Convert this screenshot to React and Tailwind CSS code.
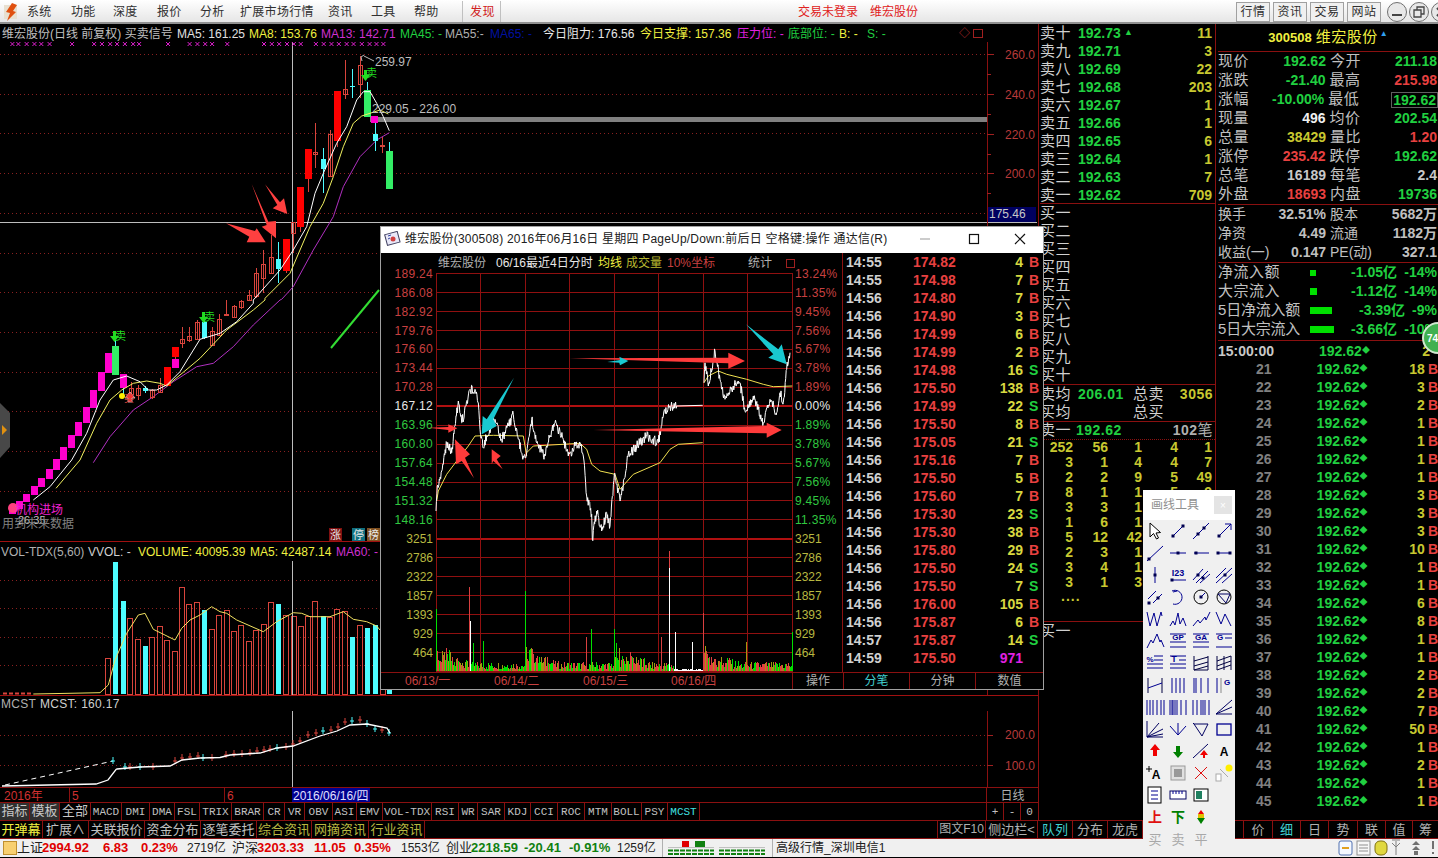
const rnd = (i) => {
  const s = Math.sin(i * 12.9898) * 43758.5453;
  return s - Math.floor(s);
};
const pts = (list) => list.map(([x, y]) => `${x.toFixed(1)},${y.toFixed(1)}`).join(" ");
// zoom crop coords -> page coords
const z9 = (list) => list.map(([x, y]) => [x / 3, 300 + y / 3]);
const z10 = (list) => list.map(([x, y]) => [x / 3, 540 + y / 3]);
const z11 = (list) => list.map(([x, y]) => [200 + x / 3, 40 + y / 3]);
const d4 = (list) => list.map(([x, y]) => [380 + x / 3, 225 + y / 3]);

function jitter(list, amp, seed) {
  const out = [];
  list.forEach((p, i) => {
    out.push(p);
    const n = list[i + 1];
    if (!n) return;
    const steps = Math.max(1, Math.round(Math.abs(n[0] - p[0]) / 1.5));
    for (let k = 1; k < steps; k++) {
      const t = k / steps;
      out.push([p[0] + (n[0] - p[0]) * t, p[1] + (n[1] - p[1]) * t + (rnd(seed + i * 31 + k) - 0.5) * amp]);
    }
  });
  return out;
}

const candleFill = { h: "none", r: "#ff0000", c: "#4dfcff", g: "#33ee66", m: "#ff00cc" };
const candleStroke = { h: "#d8443c", r: "#d8443c", c: "#4dfcff", g: "#4dfcff", m: "#4dfcff" };

const stairs = [
  [325, 158, 220], [303, 216, 272], [281, 270, 323], [259, 321, 369], [235, 367, 407], [214, 405, 444], [191, 442, 480],
  [169, 478, 511], [148, 508, 537], [124, 534, 561], [103, 558, 585], [79, 582, 606], [58, 604, 628], [38, 620, 642],
].map(([x, t, b]) => [x / 3, 300 + t / 3, 300 + b / 3, null, null, "m"]);

const c9 = (x, t, b, wt, wb, k) => [x / 3, 300 + t / 3, 300 + b / 3, wt == null ? null : 300 + wt / 3, wb == null ? null : 300 + wb / 3, k];
const c11 = (x, t, b, wt, wb, k) => [200 + x / 3, 40 + t / 3, 40 + b / 3, wt == null ? null : 40 + wt / 3, wb == null ? null : 40 + wb / 3, k];

const candles = [
  ...stairs,
  c9(347, 137, 225, 120, 137, "g"), c9(371, 222, 264, 222, 285, "m"), c9(394, 265, 282, 245, 300, "h"), c9(415, 265, 285, 255, 300, "h"),
  c9(436, 264, 272, 258, 280, "c"), c9(458, 272, 292, 268, 298, "h"), c9(480, 257, 278, 235, 280, "h"), c9(502, 202, 258, 202, 258, "r"),
  c9(526, 178, 204, 171, 204, "m"), c9(526, 141, 171, 141, 178, "r"), c9(547, 118, 130, 80, 145, "h"), c9(568, 108, 122, 80, 125, "h"),
  c9(592, 66, 118, 60, 120, "h"), c9(613, 65, 113, 45, 118, "c"), c9(637, 95, 135, 80, 138, "h"), c9(658, 58, 105, 42, 108, "h"),
  c9(680, 43, 46, 0, 46, "h"), c9(703, 20, 52, 15, 55, "h"), c9(724, 5, 22, 0, 28, "h"),
  c11(148, 765, 780, 750, 780, "h"), c11(169, 700, 770, 685, 775, "h"), c11(190, 672, 715, 630, 760, "h"), c11(213, 652, 700, 585, 702, "h"),
  c11(235, 657, 687, 605, 730, "c"), c11(259, 598, 692, 598, 700, "r"), c11(280, 547, 580, 547, 640, "h"), c11(302, 442, 560, 442, 575, "r"),
  c11(325, 328, 416, 328, 455, "r"), c11(346, 337, 343, 248, 383, "h"), c11(370, 358, 386, 325, 458, "c"), c11(391, 282, 410, 270, 412, "h"),
  c11(412, 153, 303, 153, 320, "r"), c11(436, 148, 163, 60, 178, "h"), c11(458, 138, 142, 88, 175, "c"), c11(481, 75, 133, 47, 175, "h"),
  c11(502, 150, 230, 125, 150, "g"), c11(526, 283, 304, 248, 332, "c"), c11(548, 316, 320, 292, 338, "h"), c11(568, 333, 446, 306, 333, "g"),
];

const ma5 = [
  ...z9([[100, 600], [150, 560], [215, 480], [260, 400], [300, 300], [340, 240], [380, 228], [420, 245], [445, 270], [470, 270], [500, 255], [540, 215], [600, 118], [660, 100], [710, 65], [760, 10]]),
  ...z11([[160, 780], [240, 690], [280, 630], [320, 560], [345, 460], [370, 400], [410, 310], [440, 260], [470, 180], [490, 155], [510, 155], [530, 190], [550, 230], [568, 272]]),
];
const ma8 = [
  ...z9([[168, 565], [240, 480], [290, 370], [330, 300], [365, 270], [400, 250], [440, 243], [480, 250], [500, 258], [540, 225], [600, 175], [680, 90], [760, 30], [795, 0]]),
  ...z11([[195, 775], [270, 700], [330, 560], [370, 490], [400, 410], [430, 320], [460, 250], [485, 228], [540, 210], [565, 222]]),
];
const ma13 = [
  ...z9([[280, 488], [330, 410], [400, 330], [460, 290], [520, 245], [590, 200], [640, 190], [700, 140], [760, 75], [840, 0]]),
  ...z11([[245, 778], [280, 740], [340, 630], [400, 530], [430, 440], [480, 350], [530, 300], [568, 278]]),
];

const crossX = [
  27, 40, 58, 75, 90, 108, 157, 205, 222, 240, 255, 272, 290, 303, 366, 413, 430, 447, 462, 495, 575, 592, 608, 625, 640, 655, 688, 705, 722, 738, 755, 770, 788, 805, 820, 835,
].map((x) => x / 2.178);

function MainChart() {
  const grid = Array.from({ length: 12 }, (_, i) => Math.round(54 + i * 39.7) + 0.5);
  return (
    <svg width="1038" height="499" viewBox="0 42 1038 499" className="block">
      {grid.map((y) => (
        <line key={y} x1="0" x2="987" y1={y} y2={y} stroke="#8a2020" strokeDasharray="1 3" />
      ))}
      <line x1="292.5" x2="292.5" y1="42" y2="541" stroke="#bdbdbd" />
      <line x1="0" x2="1037" y1="222.5" y2="222.5" stroke="#bdbdbd" />
      {crossX.map((x) => (
        <path key={x} d={`M${x - 2} 42l4 4m0 -4l-4 4`} stroke="#e020d0" />
      ))}
      <rect x="370" y="117" width="617" height="5" fill="#808080" />
      <polyline points={pts(ma13)} fill="none" stroke="#b030c0" />
      {candles.map(([x, t, b, wt, wb, k], i) => {
        const w = k === "h" ? 4 : k === "c" ? 5 : 7;
        return (
          <g key={i} shapeRendering="crispEdges">
            {wt != null && <line x1={x} x2={x} y1={wt} y2={wb} stroke={candleStroke[k]} />}
            <rect x={x - w / 2} y={t} width={w} height={b - t} fill={candleFill[k]} stroke={k === "h" ? candleStroke.h : "none"} />
          </g>
        );
      })}
      <rect x="371" y="116" width="7" height="7" fill="#ff00cc" />
      <polyline points={pts(ma8)} fill="none" stroke="#f0f060" />
      <polyline points={pts(ma5)} fill="none" stroke="#ffffff" />
      {/* 红色标注箭头 */}
      <polygon points={pts(z11([[78, 550], [165, 573], [170, 565], [197, 607], [140, 607], [148, 590]]))} fill="#ff4040" />
      <polygon points={pts(z11([[155, 432], [205, 545], [228, 543], [228, 595], [185, 560], [200, 555]]))} fill="#ff4040" />
      <polygon points={pts(z11([[195, 433], [240, 487], [252, 475], [262, 522], [218, 505], [232, 495]]))} fill="#ff4040" />
      <line x1="331" y1="348" x2="379" y2="290" stroke="#33dd33" strokeWidth="2" />
      {/* 信号 */}
      <path d="M361 57l3 -2 m-3 2l1 4m2 -5l10 5" stroke="#bbb" fill="none" />
      <text x="375" y="66" fontSize="12" fill="#bdbdbd">259.97</text>
      <text x="372" y="113" fontSize="12" fill="#bdbdbd">229.05 - 226.00</text>
      <path d="M364 70h3v5h3l-4.5 6l-4.5 -6h3z" fill="#22dd22" />
      <text x="366" y="77" fontSize="11" fill="#22dd22">卖</text>
      <path d="M113 331h3v5h3l-4.5 6l-4.5 -6h3z" fill="#22dd22" />
      <text x="115" y="340" fontSize="11" fill="#22dd22">卖</text>
      <path d="M202 312h3v5h3l-4.5 6l-4.5 -6h3z" fill="#22dd22" />
      <text x="204" y="321" fontSize="11" fill="#22dd22">卖</text>
      <circle cx="122" cy="396" r="3" fill="#ffee00" />
      <path d="M130 392l5 6h-3v4h-4v-4h-3z" fill="#ff3030" stroke="#d8a0a0" />
      <text x="124" y="402" fontSize="10" fill="#d8443c">买</text>
      <circle cx="13" cy="508" r="5" fill="#ff4080" />
      <text x="15" y="514" fontSize="12" fill="#f020d0">机构进场</text>
      <text x="18" y="524" fontSize="11" fill="#c0c0c0">26.35</text>
      <text x="2" y="528" fontSize="12" fill="#808080">用到未来数据</text>
      <rect x="329" y="528" width="13" height="13" fill="#801010" />
      <text x="330" y="539" fontSize="11" fill="#e8e8e8">涨</text>
      <rect x="352" y="528" width="13" height="13" fill="#107080" />
      <text x="353" y="539" fontSize="11" fill="#e8e8e8">停</text>
      <rect x="367" y="528" width="13" height="13" fill="#805020" />
      <text x="368" y="539" fontSize="11" fill="#e8e8e8">榜</text>
      {/* 坐标 */}
      <line x1="987.5" x2="987.5" y1="42" y2="541" stroke="#8a1010" />
      {[54, 94, 134, 173].map((y, i) => (
        <g key={y}>
          <line x1="987" x2="994" y1={y + 0.5} y2={y + 0.5} stroke="#a02020" />
          <line x1="987" x2="991" y1={y + 20.5} y2={y + 20.5} stroke="#a02020" />
          <text x="1005" y={y + 5} fontSize="12" fill="#b83a3a">{["260.0", "240.0", "220.0", "200.0"][i]}</text>
        </g>
      ))}
      <rect x="988" y="207" width="48" height="15" fill="#000060" />
      <text x="989" y="218" fontSize="12" fill="#c8c8c8">175.46</text>
      {/* 左侧把手 */}
      <polygon points="0,403 10,413 10,447 0,458" fill="#484848" />
      <polygon points="2,425 7,430 2,435" fill="#e09010" />
    </svg>
  );
}

const volBars = [
  [324, 355, "h"], [346, 66, "c"], [370, 183, "c"], [391, 235, "h"], [415, 297, "h"], [436, 318, "c"], [457, 291, "h"], [481, 258, "h"], [502, 300, "h"], [525, 333, "h"],
  [547, 141, "h"], [568, 192, "h"], [591, 188, "h"], [613, 210, "c"], [636, 267, "h"], [658, 225, "h"], [680, 210, "h"], [703, 273, "h"], [724, 255, "h"], [748, 303, "h"],
  [769, 272, "h"], [791, 252, "h"], [813, 188, "h"], [835, 192, "c"], [857, 225, "h"], [881, 230, "h"], [902, 258, "h"], [925, 230, "h"], [946, 183, "h"], [970, 228, "c"],
  [991, 232, "h"], [1012, 207, "h"], [1035, 213, "h"], [1057, 290, "c"], [1081, 255, "h"], [1102, 263, "c"], [1126, 255, "c"], [1148, 400, "h"], [1168, 448, "c"],
];
const volMa = [[100, 462], [300, 458], [325, 435], [345, 360], [380, 280], [415, 225], [435, 220], [460, 268], [525, 300], [545, 265], [570, 240], [600, 225], [635, 200], [660, 215], [680, 220], [710, 240], [790, 275], [830, 245], [880, 218], [905, 220], [930, 230], [990, 230], [1030, 215], [1060, 238], [1100, 245], [1130, 258], [1140, 270]];

function VolChart() {
  return (
    <svg width="1038" height="135" viewBox="0 561 1038 135" className="block">
      {[580, 608, 637, 665].map((y) => (
        <line key={y} x1="0" x2="987" y1={y + 0.5} y2={y + 0.5} stroke="#8a2020" strokeDasharray="1 3" />
      ))}
      <line x1="3" x2="33" y1="693.5" y2="693.5" stroke="#d8443c" strokeWidth="2" strokeDasharray="4 2" />
      {volBars.map(([x, t, k]) => (
        <rect key={x} shapeRendering="crispEdges" x={x / 3 - 2.5} y={540 + t / 3} width="5" height={694 - (540 + t / 3)} fill={k === "c" ? "#4dfcff" : "none"} stroke={k === "c" ? "none" : "#d8443c"} />
      ))}
      <line x1="292.5" x2="292.5" y1="561" y2="695" stroke="#bdbdbd" />
      <polyline points={pts(z10(volMa))} fill="none" stroke="#f0e060" />
      <line x1="987.5" x2="987.5" y1="561" y2="696" stroke="#8a1010" />
      <line x1="0" x2="1038" y1="695.5" y2="695.5" stroke="#a01010" />
    </svg>
  );
}

const mcstLine = [[2, 786], [96, 784], [108, 780], [116, 769.5], [117, 769], [140, 767], [170, 766], [182, 760], [200, 758], [220, 757.5], [230, 755], [260, 753], [277, 748], [293, 746], [320, 736], [337, 731], [350, 725], [367, 724], [387, 728], [390, 733]];
const mcstMarks = [[113, 761, "c"], [125, 767, "c"], [130, 767, "h"], [140, 767, "c"], [153, 767, "h"], [175, 761, "h"], [182, 758, "h"], [190, 757, "h"], [198, 756, "h"], [203, 758, "c"], [212, 758, "h"], [226, 755, "h"], [234, 754, "h"], [242, 754, "h"], [250, 753, "h"], [257, 751, "h"], [264, 750, "h"], [270, 749, "h"], [277, 748, "c"], [286, 747, "h"], [293, 744, "h"], [300, 741, "h"], [308, 735, "h"], [316, 733, "h"], [323, 731, "c"], [331, 730, "h"], [338, 727, "h"], [345, 722, "h"], [352, 721, "c"], [360, 720, "h"], [367, 724, "c"], [375, 729, "c"], [382, 730, "h"], [389, 733, "c"]];

function McstChart() {
  return (
    <svg width="1038" height="76" viewBox="0 711 1038 76" className="block">
      {[735, 765].map((y) => (
        <line key={y} x1="0" x2="987" y1={y + 0.5} y2={y + 0.5} stroke="#8a2020" strokeDasharray="1 3" />
      ))}
      <line x1="292.5" x2="292.5" y1="711" y2="787" stroke="#bdbdbd" />
      <line x1="5" y1="785" x2="113" y2="761" stroke="#ffffff" strokeDasharray="5 4" />
      {mcstMarks.map(([x, y, k]) => (
        <path key={x} d={`M${x} ${y - 4}v7M${x - 2} ${y}h4`} stroke={k === "c" ? "#4dfcff" : "#d8443c"} />
      ))}
      <polyline points={pts(mcstLine)} fill="none" stroke="#ffffff" strokeWidth="1.3" />
      <line x1="987.5" x2="987.5" y1="711" y2="787" stroke="#8a1010" />
      <line x1="987" x2="993" y1="735.5" y2="735.5" stroke="#a02020" />
      <line x1="987" x2="993" y1="765.5" y2="765.5" stroke="#a02020" />
      <text x="1005" y="739" fontSize="12" fill="#b83a3a">200.0</text>
      <text x="1005" y="770" fontSize="12" fill="#b83a3a">100.0</text>
    </svg>
  );
}

const priceLabels = ["189.24", "186.08", "182.92", "179.76", "176.60", "173.44", "170.28", "167.12", "163.96", "160.80", "157.64", "154.48", "151.32", "148.16"];
const pctLabels = ["13.24%", "11.35%", "9.45%", "7.56%", "5.67%", "3.78%", "1.89%", "0.00%", "1.89%", "3.78%", "5.67%", "7.56%", "9.45%", "11.35%"];
const volLabels = ["3251", "2786", "2322", "1857", "1393", "929", "464"];
const rowY = (k) => 272.7 + k * 18.94;
const colX = [168, 301, 435, 568, 703, 835, 970, 1102, 1237].map((x) => 380 + x / 3);

const whiteA = [[168, 855], [172, 780], [185, 735], [190, 715], [200, 650], [215, 680], [225, 600], [235, 525], [245, 590], [258, 540], [270, 490], [285, 490], [295, 530], [300, 610], [310, 665], [320, 630], [345, 580], [365, 640], [385, 600], [400, 565], [415, 640], [430, 690], [440, 680], [455, 580], [470, 650], [495, 690], [510, 630], [525, 590], [550, 640], [565, 690], [585, 660], [600, 650], [610, 690], [612, 705], [620, 810], [635, 865], [637, 940], [650, 855], [665, 915], [680, 860], [690, 900], [703, 745], [710, 775], [720, 825], [735, 755], [742, 690], [770, 660], [800, 630], [835, 650], [850, 570], [870, 540], [890, 540]];
const whiteB = [[972, 470], [975, 410], [985, 480], [1005, 375], [1020, 460], [1035, 520], [1060, 480], [1080, 470], [1095, 555], [1120, 510], [1150, 590], [1170, 520], [1190, 560], [1200, 500], [1210, 530], [1220, 430], [1230, 380]];
const yellowA = [[170, 825], [175, 795], [200, 745], [230, 705], [265, 660], [285, 630], [340, 628], [430, 630], [440, 690]];
const yellowB = [[440, 680], [460, 660], [600, 652], [620, 670], [635, 715], [660, 735], [705, 745], [720, 790], [760, 745], [840, 710], [870, 670], [895, 655], [968, 650]];
const yellowC = [[972, 470], [985, 450], [1015, 435], [1040, 445], [1100, 460], [1150, 475], [1180, 482], [1237, 480]];

const spikes = { 168: [445, "#00e000"], 268: [378, "#d84040"], 271: [480, "#ffffff"], 436: [390, "#00e000"], 868: [270, "#d84040"], 869: [320, "#ffffff"], 886: [512, "#ffffff"], 970: [455, "#d84040"], 1237: [512, "#00e000"], 635: [503, "#00e000"], 703: [505, "#00e000"], 937: [543, "#ffffff"], 843: [528, "#d84040"], 280: [545, "#00e000"], 310: [540, "#00e000"], 618: [527, "#d84040"], 1100: [543, "#a09a10"] };
const smallBars = [];
for (let x = 168, i = 0; x < 1237; x += 3, i++) {
  const day = [168, 435, 703, 970].reduce((acc, s) => (x >= s ? s : acc), 168);
  const open = Math.max(0, 1 - (x - day) / 110);
  const quiet = x > 880 && x < 970;
  const h = quiet ? 3 + rnd(i) * 6 : 6 + rnd(i) * 24 + open * rnd(i + 500) * 60;
  const c = quiet ? "#ffffff" : ["#00e000", "#e04040", "#a09a10", "#00e000", "#e04040"][Math.floor(rnd(i + 9) * 5)];
  smallBars.push([380 + x / 3, 670.5 - h / 3, c]);
}
const spikeBars = Object.entries(spikes).map(([x, [t, c]]) => [380 + Number(x) / 3, 460 + t / 3, c]);

function MinuteChart() {
  return (
    <svg width="462" height="419" viewBox="381 252 462 419" className="block">
      <g shapeRendering="crispEdges">
        {Array.from({ length: 22 }, (_, k) => (
          <line key={k} x1="436" x2="792.5" y1={rowY(k)} y2={rowY(k)} stroke={k === 7 || k === 14 ? "#b01010" : "#901010"} strokeWidth={k === 14 || k === 7 ? 2 : 1} />
        ))}
        {colX.map((x) => (
          <line key={x} x1={x} x2={x} y1="272.7" y2="670.5" stroke="#901010" />
        ))}
        {smallBars.map(([x, y, c], i) => (
          <line key={i} x1={x} x2={x} y1={y} y2="670" stroke={c} />
        ))}
        {spikeBars.map(([x, y, c], i) => (
          <line key={i} x1={x} x2={x} y1={y} y2="670" stroke={c} />
        ))}
      </g>
      {priceLabels.map((t, k) => (
        <text key={t} x="433" y={rowY(k) + 4} textAnchor="end" fontSize="12" letterSpacing="0.3" fill={k < 7 ? "#c84040" : k === 7 ? "#e8e8e8" : "#30c840"}>{t}</text>
      ))}
      {pctLabels.map((t, k) => (
        <text key={k} x="795" y={rowY(k) + 4} fontSize="12" letterSpacing="0.3" fill={k < 7 ? "#c84040" : k === 7 ? "#e8e8e8" : "#30c840"}>{t}</text>
      ))}
      {volLabels.map((t, k) => (
        <g key={t}>
          <text x="433" y={rowY(14 + k) + 4} textAnchor="end" fontSize="12" fill="#b8b840">{t}</text>
          <text x="795" y={rowY(14 + k) + 4} fontSize="12" fill="#b8b840">{t}</text>
        </g>
      ))}
      <polyline points={pts(d4(yellowA))} fill="none" stroke="#f0e050" />
      <polyline points={pts(d4(yellowB))} fill="none" stroke="#f0e050" />
      <polyline points={pts(d4(yellowC))} fill="none" stroke="#f0e050" />
      <polyline points={pts(d4(jitter(whiteA, 30, 3)))} fill="none" stroke="#ffffff" />
      <polyline points={pts(d4([[890, 540], [968, 538]]))} fill="none" stroke="#ffffff" />
      <polyline points={pts(d4(jitter(whiteB, 30, 77)))} fill="none" stroke="#ffffff" />
      {/* 标注箭头 */}
      <polygon points={pts(d4([[145, 605], [205, 603], [205, 595], [232, 607], [205, 620], [205, 612]]))} fill="#ff3b3b" />
      <polygon points={pts(d4([[225, 640], [270, 685], [255, 695], [282, 757], [245, 705], [228, 715]]))} fill="#ff3b3b" />
      <polygon points={pts(d4([[335, 670], [362, 690], [350, 700], [368, 730], [340, 705], [335, 715]]))} fill="#ff3b3b" />
      <polygon points={pts(d4([[568, 397], [1045, 395], [1045, 380], [1095, 405], [1045, 428], [1045, 412]]))} fill="#ff3b3b" />
      <polygon points={pts(d4([[640, 612], [1160, 600], [1160, 590], [1205, 612], [1160, 635], [1160, 622]]))} fill="#ff3b3b" />
      <polygon points={pts(d4([[402, 455], [340, 580], [350, 600], [305, 625], [308, 570], [320, 580]]))} fill="#19c8d0" />
      <polygon points={pts(d4([[682, 408], [720, 402], [718, 392], [745, 405], [720, 418], [718, 410]]))} fill="#19c8d0" />
      <polygon points={pts(d4([[1098, 295], [1195, 370], [1205, 355], [1220, 415], [1165, 395], [1180, 385]]))} fill="#19c8d0" />
      <line x1="842.5" x2="842.5" y1="252" y2="671" stroke="#8a1010" />
    </svg>
  );
}

const tickRows = [
  ["14:55", "174.82", "4", "B"], ["14:55", "174.98", "7", "B"], ["14:56", "174.80", "7", "B"], ["14:56", "174.90", "3", "B"], ["14:56", "174.99", "6", "B"], ["14:56", "174.99", "2", "B"],
  ["14:56", "174.98", "16", "S"], ["14:56", "175.50", "138", "B"], ["14:56", "174.99", "22", "S"], ["14:56", "175.50", "8", "B"], ["14:56", "175.05", "21", "S"], ["14:56", "175.16", "7", "B"],
  ["14:56", "175.50", "5", "B"], ["14:56", "175.60", "7", "B"], ["14:56", "175.30", "23", "S"], ["14:56", "175.30", "38", "B"], ["14:56", "175.80", "29", "B"], ["14:56", "175.50", "24", "S"],
  ["14:56", "175.50", "7", "S"], ["14:56", "176.00", "105", "B"], ["14:56", "175.87", "6", "B"], ["14:57", "175.87", "14", "S"], ["14:59", "175.50", "971", ""],
];

function MinuteDialog() {
  return (
    <div className="absolute left-[380px] top-[226px] z-10 flex h-[464px] w-[664px] flex-col border border-[#a0a0a0] bg-black">
      <div className="flex h-[26px] shrink-0 items-center bg-white pb-[2px] pl-[3px] text-[12px] text-[#202020]">
        <svg width="18" height="16" viewBox="0 0 18 16" className="mr-[3px]">
          <rect x="2" y="2" width="13" height="11" fill="#e8e8f8" stroke="#404060" transform="rotate(-15 8 8)" />
          <circle cx="9" cy="8" r="2.5" fill="#d04040" />
          <path d="M4 5l3 -1M4 8l2 -1" stroke="#3040a0" />
        </svg>
        <span className="whitespace-nowrap tracking-[0.2px]">维宏股份(300508) 2016年06月16日 星期四 PageUp/Down:前后日 空格键:操作 通达信(R)</span>
        <svg width="110" height="26" viewBox="0 0 110 26" className="ml-auto mr-[15px] shrink-0">
          <path d="M2 13h10" stroke="#999" />
          <rect x="51.5" y="8.5" width="9" height="9" fill="none" stroke="#111" strokeWidth="1.2" />
          <path d="M97 8l10 10m0 -10l-10 10" stroke="#111" strokeWidth="1.2" />
        </svg>
      </div>
      <div className="relative flex h-[419px] shrink-0">
        <div className="relative w-[462px] shrink-0">
          <MinuteChart />
          <div className="absolute left-[57px] top-[1px] flex h-[18px] items-center whitespace-nowrap text-[12px]">
            <span className="w-[58px] text-[#b0b0b0]">维宏股份</span>
            <span className="w-[102px] text-[#e8e8e8]">06/16最近4日分时</span>
            <span className="w-[28px] text-[#f0f040]">均线</span>
            <span className="w-[41px] text-[#b8b830]">成交量</span>
            <span className="w-[81px] text-[#c84040]">10%坐标</span>
            <span className="w-[38px] text-[#b0b0b0]">统计</span>
            <span className="h-[9px] w-[9px] border border-[#a02020]" />
          </div>
        </div>
        <div className="flex flex-1 flex-col text-[14px] font-bold leading-[18px]">
          {tickRows.map((r, i) => (
            <div key={i} className="flex h-[18px] items-center">
              <span className="w-[70px] pl-[3px] text-[#d0d0d0]">{r[0]}</span>
              <span className="w-[48px] text-[#e84040]">{r[1]}</span>
              <span className={r[3] ? "w-[62px] text-right text-[#d8d840]" : "w-[62px] text-right text-[#e020e0]"}>{r[2]}</span>
              <span className={r[3] === "B" ? "ml-[6px] text-[#e84040]" : "ml-[6px] text-[#20d040]"}>{r[3]}</span>
            </div>
          ))}
        </div>
      </div>
      <div className="flex h-[18px] shrink-0 items-center border-t border-[#8a1010] pb-[1px] text-[12px]">
        <div className="flex w-[411px] pl-[24px] text-[#c84040]">
          <span className="w-[89px]">06/13/一</span>
          <span className="w-[89px]">06/14/二</span>
          <span className="w-[88px]">06/15/三</span>
          <span>06/16/四</span>
        </div>
        <div className="flex h-full w-[51px] items-center justify-center border-l border-[#8a1010] text-[#b0b0b0]">操作</div>
        <div className="flex h-full w-[66px] items-center justify-center border-l border-[#8a1010] text-[#40d0d0]">分笔</div>
        <div className="flex h-full w-[66px] items-center justify-center border-l border-[#8a1010] text-[#b0b0b0]">分钟</div>
        <div className="flex h-full flex-1 items-center justify-center border-l border-[#8a1010] text-[#b0b0b0]">数值</div>
      </div>
    </div>
  );
}

const ic = (d, stroke = "#000090") => <path d={d} stroke={stroke} fill="none" />;
const dot = (x, y) => <rect x={x - 1.5} y={y - 1.5} width="3" height="3" fill="#000050" />;
const tx = (t, c, s = 9, x = 10, y = 11) => (
  <text x={x} y={y} fontSize={s} fontWeight="700" textAnchor="middle" fill={c}>{t}</text>
);
const toolIcons = [
  <path d="M5 2v14l3.5 -3.5l3 5.5l2 -1l-2.5 -5l4.500 -.5z" fill="#fff" stroke="#000" />,
  <>{ic("M4 16L16 4")}{dot(5, 15)}{dot(15, 5)}</>,
  <>{ic("M2 18L18 2")}{dot(7, 13)}{dot(13, 7)}</>,
  <>{ic("M4 16L17 3M11 3h6v6")}{dot(5, 15)}</>,
  <>{ic("M2 18L18 3")}{dot(4, 16)}</>,
  <>{ic("M2 10h16")}{dot(10, 10)}</>,
  <>{ic("M3 10h15")}{dot(5, 10)}</>,
  <>{ic("M3 10h14")}{dot(4, 10)}{dot(16, 10)}</>,
  <>{ic("M10 2v16")}{dot(10, 10)}</>,
  <>{ic("M3 15h15")}{tx("I23", "#000090", 9, 10, 11)}{dot(4, 15)}</>,
  <>{ic("M2 15L12 4M5 18L17 6M9 18L19 9")}{dot(7, 10)}{dot(12, 13)}</>,
  <>{ic("M2 13L12 3M2 18L18 3M8 18L18 9")}{dot(11, 10)}</>,
  <>{ic("M3 12L11 4M8 16L17 7")}{dot(4, 16)}{dot(13, 11)}</>,
  <>{ic("M4 4a7 7 0 1 1 1 13M5 5l4 -1")}</>,
  <><circle cx="10" cy="10" r="7" stroke="#000" fill="none" />{ic("M10 10l4 -4")}{dot(10, 10)}</>,
  <><circle cx="10" cy="10" r="7" stroke="#000" fill="none" />{ic("M4 7h12l-4 9z", "#000060")}</>,
  ic("M2 3l3 14l4 -13l3 13l4 -14l1 4"),
  ic("M2 17l3 -5l2 4l3 -12l2 11l3 -6l3 8"),
  ic("M2 17l5 -6l2 3l5 -6l1 3l4 -8"),
  ic("M2 3l5 12l4 -10l6 12"),
  ic("M2 17l4 -8l2 3l4 -9l3 8l1 -2l3 7"),
  <>{tx("GP", "#000090", 8, 10, 9)}{ic("M2 3h16M2 11h16M2 16h16")}</>,
  <>{tx("GA", "#000090", 8, 10, 9)}{ic("M2 3h16M2 11h16M2 16h16")}</>,
  <>{tx("G", "#000090", 8, 6, 9)}{ic("M2 3h16M11 7h7M2 16h16")}</>,
  <>{tx("%", "#000090", 8, 5, 9)}{ic("M2 11h16M9 7h9M2 15h16M9 3h9")}</>,
  <>{tx("T", "#000090", 9, 6, 9)}{ic("M2 3h16M11 7h7M2 11h16M2 15h16")}</>,
  <>{ic("M3 3v14h14V3M3 8l14 -4M3 13l14 -4M3 17l14 -4", "#000040")}</>,
  <>{ic("M3 3v14M10 3v14M17 3v14M3 8l14 -5M3 13l14 -5M3 17l14 -5", "#000040")}</>,
  <>{ic("M3 3v15M17 3v15", "#000040")}{ic("M3 13l14 -5", "#000090")}</>,
  <>{ic("M4 3v15M8 3v15M12 3v15M16 3v15", "#000090")}</>,
  <>{ic("M3 3v15M10 3v15M17 3v15", "#000090")}{ic("M5 3v15")}</>,
  <>{ic("M3 3v15", "#000090")}{ic("M7 3v15", "#888")}{tx("G", "#000090", 8, 13, 10)}</>,
  <>{ic("M2 3v15M5 3v15M8 3v15M12 3v15M16 3v15M19 3v15")}</>,
  <>{ic("M2 3v15M4 3v15M5 3v15M7 3v15M9 3v15M13 3v15M18 3v15")}</>,
  <>{ic("M2 3v15M6 3v15M10 3v15M12 3v15M14 3v15M18 3v15")}</>,
  <>{ic("M2 17L18 3M2 17l16 -7M2 17h16", "#000060")}</>,
  <>{ic("M2 2v16h16M2 18L14 4M2 18l16 -8M2 18l16 -3", "#000060")}</>,
  ic("M2 7l8 9l8 -9M10 4v12"),
  ic("M3 5h14l-6 12zM3 5l-1 -1", "#000060"),
  <rect x="3" y="5" width="14" height="11" fill="none" stroke="#000090" strokeWidth="1.3" />,
  <path d="M10 3l5 6h-3v6h-4v-6h-3z" fill="#f00000" />,
  <path d="M10 17l5 -6h-3v-6h-4v6h-3z" fill="#008000" />,
  <>{ic("M2 17L17 3", "#000060")}<path d="M13 9l4 5h-3v3h-2v-3h-3z" fill="#f00000" /></>,
  tx("A", "#000", 12, 10, 15),
  <>{ic("M4 3v6M1 6h6", "#000")}{tx("A", "#000", 12, 11, 16)}</>,
  <><rect x="3" y="3" width="14" height="14" fill="#e0e0e0" stroke="#999" /><rect x="6" y="6" width="8" height="8" fill="#999" /></>,
  ic("M4 4l12 12M16 4L4 16", "#e01010"),
  <><rect x="2" y="11" width="5" height="7" fill="#fff" stroke="#aaa" />{ic("M6 6l8 8", "#aaa")}<circle cx="15" cy="5" r="3.5" fill="#ffee00" /></>,
  <><rect x="3" y="2" width="13" height="16" fill="#fff" stroke="#000" />{ic("M6 6h7M6 10h7M6 14h7")}</>,
  <><rect x="2" y="6" width="16" height="8" fill="#fff" stroke="#000060" />{ic("M5 6v3M8 6v3M11 6v3M14 6v3")}</>,
  <><rect x="3" y="4" width="14" height="12" fill="#fff" stroke="#000" /><rect x="5" y="6" width="6" height="8" fill="#208060" /></>,
  null,
  tx("上", "#e01010", 14, 10, 15),
  tx("下", "#008000", 14, 10, 15),
  <><path d="M10 3l3 4h-6z" fill="#f00000" /><rect x="7" y="7" width="6" height="4" fill="#e0c000" /><path d="M10 17l-4 -6h8z" fill="#008000" /></>,
  null,
  <text x="10" y="15" fontSize="13" textAnchor="middle" fill="#a8a8a8">买</text>,
  <text x="10" y="15" fontSize="13" textAnchor="middle" fill="#a8a8a8">卖</text>,
  <text x="10" y="15" fontSize="13" textAnchor="middle" fill="#a8a8a8">平</text>,
  null,
];

function DrawTools() {
  return (
    <div className="absolute left-[1143px] top-[490px] z-20 h-[360px] w-[92px] bg-[#f0f0f0]">
      <div className="flex h-[30px] items-center justify-between bg-white pl-[8px] pr-[3px] text-[12px] text-[#909090]">
        <span>画线工具</span>
        <span className="flex h-[18px] w-[18px] items-center justify-center bg-[#e4e4e4] text-[10px] text-white">×</span>
      </div>
      <div className="grid grid-cols-[repeat(4,23px)] auto-rows-[22px]">
        {toolIcons.map((icon, i) => (
          <div key={i} className="flex items-center justify-center">
            <svg width="20" height="20" viewBox="0 0 20 20">{icon}</svg>
          </div>
        ))}
      </div>
    </div>
  );
}

const sellRows = [["卖十", "192.73", "11"], ["卖九", "192.71", "3"], ["卖八", "192.69", "22"], ["卖七", "192.68", "203"], ["卖六", "192.67", "1"], ["卖五", "192.66", "1"], ["卖四", "192.65", "6"], ["卖三", "192.64", "1"], ["卖二", "192.63", "7"], ["卖一", "192.62", "709"]];
const buyRows = ["买一", "买二", "买三", "买四", "买五", "买六", "买七", "买八", "买九", "买十"];
const queueRows = [["252", "56", "1", "4", "1"], ["3", "1", "4", "4", "7"], ["2", "2", "9", "5", "49"], ["8", "1", "1", "5", "9"], ["3", "3", "1", "2", "1"], ["1", "6", "1", "1", "2"], ["5", "12", "42", "1", "5"], ["2", "3", "1", "3", "1"], ["3", "4", "1", "2", "1"], ["3", "1", "3", "1", "6"]];

function MidColumn() {
  return (
    <div className="flex w-[177px] shrink-0 flex-col border-l border-[#8a1010] pl-[1px]">
      <div className="h-[180px] border-b border-[#8a1010]">
        {sellRows.map((r, i) => (
          <div key={r[0]} className="flex h-[18px] items-center">
            <span className="w-[38px] text-[15px] tracking-[0.5px] text-[#d0d0d0]">{r[0]}</span>
            <span className="w-[46px] text-[14px] font-bold text-[#20d040]">{r[1]}</span>
            <span className="w-[10px] text-[9px] text-[#20d040]">{i === 0 ? "▲" : ""}</span>
            <span className="w-[78px] text-right text-[14px] font-bold text-[#c8c830]">{r[2]}</span>
          </div>
        ))}
      </div>
      <div className="h-[181px] border-b border-[#8a1010]">
        {buyRows.map((t) => (
          <div key={t} className="flex h-[18px] items-center text-[15px] tracking-[0.5px] text-[#d0d0d0]">{t}</div>
        ))}
      </div>
      <div className="h-[37px] border-b border-[#8a1010]">
        <div className="flex h-[18px] items-center text-[15px] tracking-[0.5px] text-[#d0d0d0]">
          <span className="w-[38px]">卖均</span>
          <span className="w-[55px] text-[14px] font-bold text-[#20d040]">206.01</span>
          <span className="w-[40px]">总卖</span>
          <span className="w-[40px] text-right text-[14px] font-bold text-[#c8c830]">3056</span>
        </div>
        <div className="flex h-[18px] items-center text-[15px] tracking-[0.5px] text-[#d0d0d0]">
          <span className="w-[93px]">买均</span>
          <span>总买</span>
        </div>
      </div>
      <div className="flex h-[18px] items-center border-b border-dotted border-[#8a1010] text-[15px] tracking-[0.5px] text-[#d0d0d0]">
        <span className="w-[36px]">卖一</span>
        <span className="text-[14px] font-bold text-[#20d040]">192.62</span>
        <span className="ml-auto pr-[2px] text-[14px] font-bold text-[#b0b0b0]">102<span className="text-[15px] font-normal">笔</span></span>
      </div>
      <div className="h-[182px] border-b border-[#8a1010] text-[14px] font-bold text-[#c8c830]">
        {queueRows.map((r, i) => (
          <div key={i} className="grid h-[15px] grid-cols-[33px_35px_34px_36px_34px] items-center text-right leading-[15px]">
            {r.map((v, j) => (
              <span key={j}>{v}</span>
            ))}
          </div>
        ))}
        <div className="pl-[21px] leading-[12px] tracking-[1px]">....</div>
      </div>
      <div className="flex h-[18px] items-center text-[15px] tracking-[0.5px] text-[#d0d0d0]">买一</div>
    </div>
  );
}

const quoteRows = [
  ["现价", "192.62", "text-[#20d040]", "今开", "211.18", "text-[#20d040]"],
  ["涨跌", "-21.40", "text-[#20d040]", "最高", "215.98", "text-[#e84040]"],
  ["涨幅", "-10.00%", "text-[#20d040]", "最低", "192.62", "text-[#20d040] border border-[#606060]"],
  ["现量", "496", "text-[#f0f0f0]", "均价", "202.54", "text-[#20d040]"],
  ["总量", "38429", "text-[#c8c830]", "量比", "1.20", "text-[#e84040]"],
  ["涨停", "235.42", "text-[#e84040]", "跌停", "192.62", "text-[#20d040]"],
  ["总笔", "16189", "text-[#c8c8c8]", "每笔", "2.4", "text-[#c8c8c8]"],
  ["外盘", "18693", "text-[#e84040]", "内盘", "19736", "text-[#20d040]"],
];
const fundRows = [
  ["换手", "32.51%", "股本", "5682万"],
  ["净资", "4.49", "流通", "1182万"],
  ["收益(一)", "0.147", "PE(动)", "327.1"],
];
const tradeRows = [
  [21, 18], [22, 3], [23, 2], [24, 1], [25, 1], [26, 1], [27, 1], [28, 3], [29, 3], [30, 3], [31, 10], [32, 1], [33, 1],
  [34, 6], [35, 8], [36, 1], [37, 1], [38, 2], [39, 2], [40, 7], [41, 50], [42, 1], [43, 2], [44, 1], [45, 1],
];

function RightColumn() {
  return (
    <div className="relative flex w-[223px] shrink-0 flex-col border-l border-[#8a1010] pl-[2px]">
      <div className="flex h-[28px] items-center justify-center border-b border-[#8a1010] text-[#f0f040]">
        <span className="text-[13px] font-bold">300508</span>
        <span className="ml-[4px] text-[15px] tracking-[0.5px]">维宏股份</span>
        <span className="mb-[8px] ml-[2px] text-[8px] text-[#30a0f0]">▲</span>
      </div>
      <div className="h-[153px] border-b border-[#8a1010]">
        {quoteRows.map((r) => (
          <div key={r[0]} className="flex h-[19px] items-center">
            <span className="w-[36px] text-[15px] tracking-[0.5px] text-[#c0c0c0]">{r[0]}</span>
            <span className={`w-[72px] text-right text-[14px] font-bold ${r[2]}`}>{r[1]}</span>
            <span className="ml-[4px] w-[64px] text-[15px] tracking-[0.5px] text-[#c0c0c0]">{r[3]}</span>
            <span className={`ml-auto h-[16px] pl-[1px] pr-[1px] text-right text-[14px] font-bold leading-[15px] ${r[5]}`}>{r[4]}</span>
          </div>
        ))}
      </div>
      <div className="h-[58px] border-b border-[#8a1010] text-[#c0c0c0]">
        {fundRows.map((r) => (
          <div key={r[0]} className="flex h-[19px] items-center whitespace-nowrap">
            <span className="w-[50px] text-[14px] leading-[19px]">{r[0]}</span>
            <span className="w-[58px] text-right text-[14px] font-bold">{r[1]}</span>
            <span className="ml-[4px] w-[54px] text-[14px]">{r[2]}</span>
            <span className="ml-auto pr-[1px] text-right text-[14px] font-bold">{r[3]}</span>
          </div>
        ))}
      </div>
      <div className="h-[78px] overflow-hidden border-b border-[#8a1010] text-[15px] text-[#c0c0c0]">
        <div className="flex h-[19px] items-center">
          <span className="w-[92px] tracking-[0.5px]">净流入额</span>
          <span className="h-[6px] w-[6px] bg-[#00e000]" />
          <span className="w-[81px] text-right text-[14px] font-bold text-[#20d040]">-1.05亿</span>
          <span className="ml-auto pr-[1px] text-[14px] font-bold text-[#20d040]">-14%</span>
        </div>
        <div className="flex h-[19px] items-center">
          <span className="w-[92px] tracking-[0.5px]">大宗流入</span>
          <span className="h-[7px] w-[7px] bg-[#00e000]" />
          <span className="w-[80px] text-right text-[14px] font-bold text-[#20d040]">-1.12亿</span>
          <span className="ml-auto pr-[1px] text-[14px] font-bold text-[#20d040]">-14%</span>
        </div>
        <div className="flex h-[19px] items-center">
          <span className="w-[92px] tracking-[-0.2px]">5日净流入额</span>
          <span className="h-[7px] w-[22px] bg-[#00e000]" />
          <span className="w-[73px] text-right text-[14px] font-bold text-[#20d040]">-3.39亿</span>
          <span className="ml-auto pr-[1px] text-[14px] font-bold text-[#20d040]">-9%</span>
        </div>
        <div className="flex h-[19px] items-center">
          <span className="w-[92px] tracking-[-0.2px]">5日大宗流入</span>
          <span className="h-[7px] w-[24px] bg-[#00e000]" />
          <span className="w-[63px] text-right text-[14px] font-bold text-[#20d040]">-3.66亿</span>
          <span className="ml-auto pr-[1px] text-[14px] font-bold text-[#20d040]">-10%</span>
        </div>
      </div>
      <div className="mt-[1px] text-[14px] font-bold">
        <div className="flex h-[18px] items-center whitespace-nowrap">
          <span className="w-[56px] text-[#c8c8c8]">15:00:00</span>
          <span className="ml-[45px] w-[43px] text-[#20d040]">192.62</span>
          <span className="w-[8px] text-[8px] text-[#20d040]">◆</span>
          <span className="w-[60px] text-right text-[#c8c830]">2</span>
        </div>
        {tradeRows.map(([n, v]) => (
          <div key={n} className="flex h-[18px] items-center">
            <span className="w-[56px] text-right text-[#808080]">{n}</span>
            <span className="ml-[45px] w-[43px] text-[#20d040]">192.62</span>
            <span className="w-[8px] text-[8px] text-[#20d040]">◆</span>
            <span className="w-[60px] text-right text-[#c8c830]">{v}</span>
            <span className="ml-[3px] text-[#e84040]">B</span>
          </div>
        ))}
      </div>
      <div className="absolute right-[-16px] top-[298px] z-10 flex h-[32px] w-[32px] items-center rounded-full border-2 border-[#d0e8d0] bg-[#40b050] pl-[3px] text-[10px] font-bold text-white">74</div>
    </div>
  );
}

const menus = [["系统", "w-[44px]"], ["功能", "w-[42px]"], ["深度", "w-[44px]"], ["报价", "w-[43px]"], ["分析", "w-[40px]"], ["扩展市场行情", "w-[88px]"], ["资讯", "w-[43px]"], ["工具", "w-[43px]"], ["帮助", "w-[48px]"]];
const webBtns = ["行情", "资讯", "交易", "网站"];

function TopBar() {
  return (
    <div className="flex h-[24px] shrink-0 items-center border-b-2 border-[#909090] bg-gradient-to-b from-[#ffffff] to-[#e6e6e6] pt-[1px] text-[12px] text-[#303030]">
      <svg width="27" height="22" viewBox="0 0 27 22" className="shrink-0">
        <path d="M4 4h13v14H4z" fill="#e8e0d0" />
        <path d="M12 2l5 2l-4 6l3 1l-9 9l3 -8l-4 -1z" fill="#e05010" />
      </svg>
      {menus.map(([t, w]) => (
        <span key={t} className={`${w} shrink-0 tracking-[0.3px]`}>{t}</span>
      ))}
      <span className="h-full w-[8px] shrink-0 border-l border-[#c0c0c0]" />
      <span className="w-[30px] shrink-0 tracking-[0.4px] text-[#d02020]">发现</span>
      <span className="h-full shrink-0 border-l border-[#c0c0c0]" />
      <span className="ml-[297px] w-[72px] shrink-0 text-[#e02020]">交易未登录</span>
      <span className="w-[60px] shrink-0 text-[#e02020]">维宏股份</span>
      <div className="ml-[306px] flex gap-[3px]">
        {webBtns.map((t) => (
          <span key={t} className="flex h-[20px] w-[34px] items-center justify-center border border-[#a0a0a0] bg-[#f0f0f0] tracking-[0.4px]">{t}</span>
        ))}
      </div>
      <svg width="66" height="22" viewBox="0 0 66 22" className="ml-[5px] shrink-0">
        <circle cx="11" cy="11" r="9.5" fill="#e8e8e8" stroke="#707070" />
        <path d="M6 14h10" stroke="#444" strokeWidth="2" />
        <circle cx="33" cy="11" r="9.5" fill="#e8e8e8" stroke="#707070" />
        <path d="M28 9h7v7h-7zM31 9V6h7v7h-3" fill="none" stroke="#444" strokeWidth="1.3" />
        <circle cx="55" cy="11" r="9.5" fill="#e8e8e8" stroke="#707070" />
        <path d="M51 7l8 8m0 -8l-8 8" stroke="#444" strokeWidth="2.2" />
      </svg>
    </div>
  );
}

const tabs1 = [
  ["指标", "w-[30px] text-[13px] text-[#c8c8c8] bg-[#303030]"], ["模板", "w-[30px] text-[13px] text-[#c8c8c8] bg-[#303030]"], ["全部", "w-[31px] text-[13px] text-[#c8c8c8]"],
  ["MACD", "w-[31px]"], ["DMI", "w-[28px]"], ["DMA", "w-[25px]"], ["FSL", "w-[25px]"], ["TRIX", "w-[32px]"], ["BRAR", "w-[32px]"], ["CR", "w-[21px]"], ["VR", "w-[20px]"], ["OBV", "w-[28px]"], ["ASI", "w-[24px]"], ["EMV", "w-[26px]"],
  ["VOL-TDX", "w-[49px]"], ["RSI", "w-[27px]"], ["WR", "w-[19px]"], ["SAR", "w-[27px]"], ["KDJ", "w-[26px]"], ["CCI", "w-[27px]"], ["ROC", "w-[27px]"], ["MTM", "w-[27px]"], ["BOLL", "w-[30px]"], ["PSY", "w-[26px]"], ["MCST", "w-[32px] text-[#40e0e0]"],
];
const tabs2 = [
  ["开弹幕", "w-[43px] text-[#f0f040]"], ["扩展∧", "w-[46px] text-[#c0c0c0]"], ["关联报价", "w-[56px] text-[#c0c0c0]"], ["资金分布", "w-[56px] text-[#c0c0c0]"], ["逐笔委托", "w-[56px] text-[#c0c0c0]"],
  ["综合资讯", "w-[55px] text-[#b8b840]"], ["网摘资讯", "w-[57px] text-[#b8b840]"], ["行业资讯", "w-[56px] text-[#b8b840]"],
];
const tabs3 = [["图文F10", "w-[48px] text-[12px] text-[#b0b0b0]"], ["侧边栏<", "w-[52px] text-[#b0b0b0]"], ["队列", "w-[35px] text-[#40d0d0]"], ["分布", "w-[35px] text-[#b0b0b0]"], ["龙虎", "w-[35px] text-[#b0b0b0]"], ["", "w-[34px]"], ["", "w-[34px]"], ["", "w-[33px]"]];
const tabs4 = [["价", "w-[29px] text-[#b0b0b0]"], ["细", "w-[28px] text-[#40d0d0]"], ["日", "w-[28px] text-[#b0b0b0]"], ["势", "w-[29px] text-[#b0b0b0]"], ["联", "w-[28px] text-[#b0b0b0]"], ["值", "w-[27px] text-[#b0b0b0]"], ["筹", "w-[26px] text-[#b0b0b0]"]];

function BottomTabs() {
  return (
    <div className="flex h-[19px] shrink-0 whitespace-nowrap border-y border-[#8a1010] text-[13px] leading-[17px]">
      {tabs2.map(([t, c]) => (
        <span key={t} className={`${c} shrink-0 border-r border-[#8a1010] text-center`}>{t}</span>
      ))}
      <span className="flex-1" />
      {tabs3.map(([t, c], i) => (
        <span key={i} className={`${c} shrink-0 border-l border-[#8a1010] text-center`}>{t}</span>
      ))}
      {tabs4.map(([t, c]) => (
        <span key={t} className={`${c} shrink-0 border-l border-[#8a1010] text-center`}>{t}</span>
      ))}
    </div>
  );
}

function StatusBar() {
  return (
    <div className="flex h-[18px] shrink-0 items-center whitespace-nowrap bg-[#f0f0f0] text-[13px] leading-[18px] text-[#202020]">
      <span className="ml-[3px] h-[14px] w-[14px] shrink-0 border border-[#c09030] bg-[#f8d070]" />
      <span className="w-[25px] shrink-0">上证</span>
      <span className="w-[61px] shrink-0 font-bold text-[#e00000]">2994.92</span>
      <span className="w-[38px] shrink-0 font-bold text-[#e00000]">6.83</span>
      <span className="w-[46px] shrink-0 font-bold text-[#e00000]">0.23%</span>
      <span className="w-[45px] shrink-0 text-[12px]">2719亿</span>
      <span className="w-[25px] shrink-0">沪深</span>
      <span className="w-[57px] shrink-0 font-bold text-[#e00000]">3203.33</span>
      <span className="w-[40px] shrink-0 font-bold text-[#e00000]">11.05</span>
      <span className="w-[47px] shrink-0 font-bold text-[#e00000]">0.35%</span>
      <span className="w-[45px] shrink-0 text-[12px]">1553亿</span>
      <span className="w-[25px] shrink-0">创业</span>
      <span className="w-[53px] shrink-0 font-bold text-[#108010]">2218.59</span>
      <span className="w-[45px] shrink-0 font-bold text-[#108010]">-20.41</span>
      <span className="w-[48px] shrink-0 font-bold text-[#108010]">-0.91%</span>
      <span className="w-[45px] shrink-0 text-[12px]">1259亿</span>
      <svg width="110" height="18" viewBox="0 0 110 18" className="shrink-0">
        <path d="M0.5 0v18" stroke="#b0b0b0" />
        <rect x="20" y="2" width="7" height="6" fill="#e00000" />
        <rect x="33" y="2" width="10" height="6" fill="#108010" />
        <path d="M6 8.5h46" stroke="#c0c0c0" />
        <path d="M6 11.5h46M6 15h46M57 11.5h46M57 15h46" stroke="#108010" strokeWidth="2" strokeDasharray="5 1" />
        <path d="M57 8.5h46" stroke="#c0c0c0" />
      </svg>
      <span className="shrink-0 border-l border-[#b0b0b0] pl-[3px] text-[12px]">高级行情_深圳电信1</span>
      <span className="flex-1" />
      <svg width="100" height="18" viewBox="0 0 100 18" className="shrink-0">
        <rect x="1" y="2" width="13" height="14" rx="2" fill="#f4f8ff" stroke="#5070b0" />
        <path d="M4 9h7" stroke="#e0a020" strokeWidth="2" />
        <rect x="19" y="2" width="13" height="14" fill="#f8f8f8" stroke="#909090" />
        <path d="M21 6h9M21 9h9M21 12h9" stroke="#909090" />
        <rect x="37" y="2" width="12" height="14" rx="5" fill="#e0d840" stroke="#807010" />
        <path d="M58 2v14M54 4l4 4l4 -4M54 1h8" stroke="#808080" fill="none" />
        <path d="M78 2l4 4h-8zM78 7l4 4h-8zM76 12h4v4h-4z" fill="#707070" />
        <path d="M95 2v8M95 13v2" stroke="#707070" strokeWidth="2" />
      </svg>
    </div>
  );
}

export default function App() {
  return (
    <div className="relative flex h-[858px] w-[1438px] flex-col overflow-hidden bg-black font-['Liberation_Sans','Noto_Sans_CJK_SC',sans-serif] text-[12px]">
      <TopBar />
      <div className="flex h-[796px] shrink-0">
        <div className="flex w-[1038px] shrink-0 flex-col">
          <div className="flex h-[18px] items-center whitespace-nowrap pl-[2px] pt-[1px] text-[12px]">
            <span className="w-[175px] shrink-0 text-[#c0c0c0]">维宏股份(日线 前复权) 买卖信号</span>
            <span className="w-[72px] shrink-0 text-[#e0e0e0]">MA5: 161.25</span>
            <span className="w-[72px] shrink-0 text-[#f0f040]">MA8: 153.76</span>
            <span className="w-[79px] shrink-0 text-[#d030d0]">MA13: 142.71</span>
            <span className="w-[45px] shrink-0 text-[#20d040]">MA45: -</span>
            <span className="w-[45px] shrink-0 text-[#b0b0b0]">MA55:-</span>
            <span className="w-[53px] shrink-0 text-[#0010a0]">MA65: -</span>
            <span className="w-[97px] shrink-0 text-[#e8e8e8]">今日阻力: 176.56</span>
            <span className="w-[97px] shrink-0 text-[#f0f040]">今日支撑: 157.36</span>
            <span className="w-[51px] shrink-0 text-[#e020e0]">压力位: -</span>
            <span className="w-[51px] shrink-0 text-[#20d040]">底部位: -</span>
            <span className="w-[28px] shrink-0 text-[#f0f040]">B: -</span>
            <span className="w-[92px] shrink-0 text-[#20d040]">S: -</span>
            <span className="w-[14px] shrink-0 text-[11px] text-[#c03030]">◇</span>
            <span className="h-[9px] w-[10px] shrink-0 border border-[#a02020]" />
          </div>
          <MainChart />
          <div className="flex h-[20px] shrink-0 items-center whitespace-nowrap border-t border-[#a01010] pl-[1px] text-[12px]">
            <span className="w-[87px] shrink-0 text-[#b0b0b0]">VOL-TDX(5,60)</span>
            <span className="w-[50px] shrink-0 text-[#d0d0d0]">VVOL: -</span>
            <span className="w-[112px] shrink-0 text-[#f0f040]">VOLUME: 40095.39</span>
            <span className="w-[86px] shrink-0 text-[#f0f040]">MA5: 42487.14</span>
            <span className="shrink-0 text-[#d030d0]">MA60: -</span>
          </div>
          <VolChart />
          <div className="flex h-[15px] shrink-0 items-center whitespace-nowrap pl-[1px] text-[12px] tracking-[0.3px]">
            <span className="w-[39px] shrink-0 text-[#b0b0b0]">MCST</span>
            <span className="text-[#d0d0d0]">MCST: 160.17</span>
          </div>
          <McstChart />
          <div className="flex h-[16px] shrink-0 border-y border-[#8a1010] text-[12px] leading-[16px] text-[#d03030]">
            <span className="w-[70px] shrink-0 border-r border-[#8a1010] pl-[4px]">2016年</span>
            <span className="w-[155px] shrink-0 border-r border-[#8a1010] pl-[2px]">5</span>
            <span className="w-[67px] shrink-0 pl-[2px]">6</span>
            <span className="w-[78px] shrink-0 bg-[#000090] pl-[1px] text-[#e0e0ff]">2016/06/16/四</span>
            <span className="flex-1 border-r border-[#8a1010]" />
            <span className="w-[51px] shrink-0 text-center text-[#b0b0b0]">日线</span>
          </div>
          <div className="flex h-[17px] shrink-0 overflow-hidden font-['Liberation_Mono','Noto_Sans_CJK_SC',monospace] text-[11px] leading-[18px] text-[#c0c0c0]">
            {tabs1.map(([t, c]) => (
              <span key={t} className={`${c} shrink-0 border-r border-[#8a1010] text-center`}>{t}</span>
            ))}
            <span className="flex-1 border-r border-[#8a1010]" />
            <span className="w-[17px] shrink-0 border-r border-[#8a1010] text-center">+</span>
            <span className="w-[17px] shrink-0 border-r border-[#8a1010] text-center">-</span>
            <span className="w-[17px] shrink-0 text-center">0</span>
          </div>
        </div>
        <MidColumn />
        <RightColumn />
      </div>
      <BottomTabs />
      <StatusBar />
      <MinuteDialog />
      <DrawTools />
    </div>
  );
}
